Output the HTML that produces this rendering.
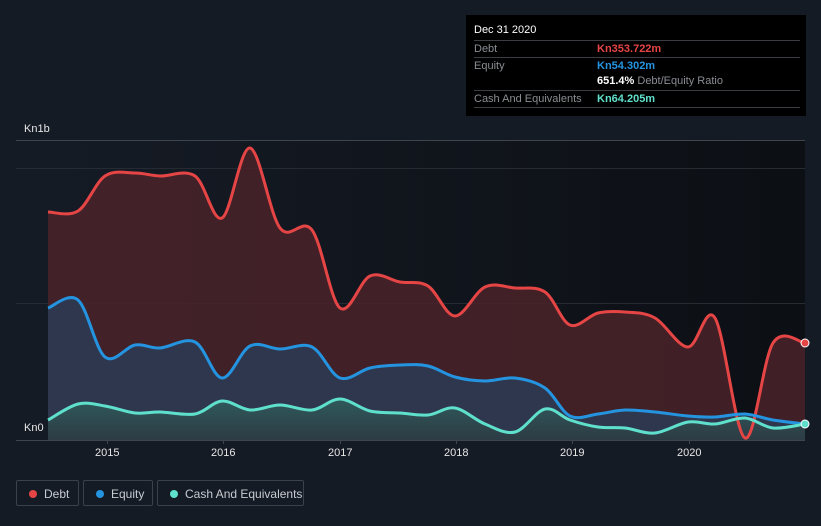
<!DOCTYPE html>
<html><head><style>
body{margin:0;width:821px;height:526px;background:#151b25;font-family:"Liberation Sans",sans-serif;overflow:hidden;position:relative}
.tt{position:absolute;left:466px;top:15px;width:340px;height:101px;background:#000;color:#fff;font-size:11px}
.row{position:absolute;left:8px;width:326px;border-top:1px solid #3a3d42;height:16px;line-height:16px}
.lab{color:#8a8d92;position:absolute;left:0}
.val{position:absolute;left:123px;font-weight:bold}
.ax{position:absolute;color:#e6e6e6;font-size:11px}
.lg{position:absolute;top:480px;height:26px;border:1px solid #3b414b;border-radius:2px;color:#c8cbd0;font-size:12px;line-height:26px;box-sizing:border-box}
.lg i{position:absolute;left:12px;top:9px;width:8px;height:8px;border-radius:50%}
.lg span{position:absolute;left:27px}
</style></head><body>
<svg width="821" height="526" style="position:absolute;left:0;top:0">
<defs>
<linearGradient id="bg" x1="0" x2="1"><stop offset="0" stop-color="#151b25"/><stop offset="1" stop-color="#0c0f14"/></linearGradient>
<linearGradient id="cg" x1="0" y1="0" x2="0" y2="1"><stop offset="0" stop-color="#2f5a5c"/><stop offset="1" stop-color="#2d3b44"/></linearGradient>
</defs>
<rect x="48" y="140" width="757" height="300" fill="url(#bg)"/>
<line x1="16" y1="140.5" x2="805" y2="140.5" stroke="#40454d"/>
<line x1="16" y1="168.5" x2="805" y2="168.5" stroke="#262b33"/>
<line x1="16" y1="303.5" x2="805" y2="303.5" stroke="#262b33"/>
<path id="df" fill="#4a2329" fill-opacity="0.85"/>
<path id="ef" fill="#2c3a52" fill-opacity="0.9"/>
<path id="cf" fill="url(#cg)"/>
<path id="dl" fill="none" stroke="#e64545" stroke-width="3"/>
<path id="el" fill="none" stroke="#2594e0" stroke-width="3"/>
<path id="cl" fill="none" stroke="#5fe0cc" stroke-width="3"/>
<circle cx="805" cy="343" r="4" fill="#e64545" stroke="#fff" stroke-width="1"/>
<circle cx="805" cy="424" r="4" fill="#5fe0cc" stroke="#fff" stroke-width="1"/>
<line x1="16" y1="440.5" x2="805" y2="440.5" stroke="#40454d"/>
<g stroke="#40454d"><line x1="107.5" y1="440" x2="107.5" y2="444"/><line x1="223.5" y1="440" x2="223.5" y2="444"/><line x1="340.5" y1="440" x2="340.5" y2="444"/><line x1="456.5" y1="440" x2="456.5" y2="444"/><line x1="572.5" y1="440" x2="572.5" y2="444"/><line x1="689.5" y1="440" x2="689.5" y2="444"/></g>
</svg>
<script>
function sm(p){var d="M"+p[0][0]+","+p[0][1];for(var i=0;i<p.length-1;i++){var a=p[i-1]||p[i],b=p[i],c=p[i+1],e=p[i+2]||c;var k=6;d+=" C"+(b[0]+(c[0]-a[0])/k)+","+(b[1]+(c[1]-a[1])/k)+" "+(c[0]-(e[0]-b[0])/k)+","+(c[1]-(e[1]-b[1])/k)+" "+c[0]+","+c[1];}return d;}
function P(s){return s.split(" ").map(function(t){return t.split(",").map(Number)});}
var D=P("48,212 78,211 105,176 135,173 160,176 195,176 222,218 250,148 280,228 312,230 340,308 370,276 400,282 428,286 455,316 485,287 515,288 545,292 570,325 598,313 625,312 655,318 688,347 715,318 745,438 773,343 805,343");
var E=P("48,308 78,300 105,357 135,345 160,348 195,342 222,378 250,346 280,349 312,347 340,378 370,368 400,365 428,366 455,377 485,381 515,378 545,388 570,416 598,414 625,410 655,412 688,416 715,417 745,414 773,420 805,424");
var C=P("48,420 78,404 105,406 135,413 160,412 195,414 222,401 250,410 280,405 312,410 340,399 370,411 400,413 428,415 455,408 485,424 515,432 545,409 570,420 598,427 625,428 655,433 688,422 715,424 745,418 773,428 805,424");
[[D,"d"],[E,"e"],[C,"c"]].forEach(function(x){var s=sm(x[0]);document.getElementById(x[1]+"l").setAttribute("d",s);document.getElementById(x[1]+"f").setAttribute("d",s+" L805,440 L48,440 Z");});
</script>
<div class="ax" style="left:24px;top:123px">Kn1b</div>
<div class="ax" style="left:24px;top:422px">Kn0</div>
<div class="ax" style="left:95px;top:447px">2015</div>
<div class="ax" style="left:211px;top:447px">2016</div>
<div class="ax" style="left:328px;top:447px">2017</div>
<div class="ax" style="left:444px;top:447px">2018</div>
<div class="ax" style="left:560px;top:447px">2019</div>
<div class="ax" style="left:677px;top:447px">2020</div>
<div class="tt">
<div style="position:absolute;left:8px;top:9px">Dec 31 2020</div>
<div class="row" style="top:25px"><span class="lab">Debt</span><span class="val" style="color:#e64545">Kn353.722m</span></div>
<div class="row" style="top:42px"><span class="lab">Equity</span><span class="val" style="color:#2594e0">Kn54.302m</span></div>
<div class="row" style="top:58px;border-top:none"><span class="val">651.4% <span style="color:#8a8d92;font-weight:normal">Debt/Equity Ratio</span></span></div>
<div class="row" style="top:75px;border-bottom:1px solid #3a3d42"><span class="lab">Cash And Equivalents</span><span class="val" style="color:#5fe0cc">Kn64.205m</span></div>
</div>
<div class="lg" style="left:16px;width:63px"><i style="background:#e64545"></i><span>Debt</span></div>
<div class="lg" style="left:83px;width:70px"><i style="background:#2594e0"></i><span>Equity</span></div>
<div class="lg" style="left:157px;width:147px"><i style="background:#5fe0cc"></i><span>Cash And Equivalents</span></div>
</body></html>
